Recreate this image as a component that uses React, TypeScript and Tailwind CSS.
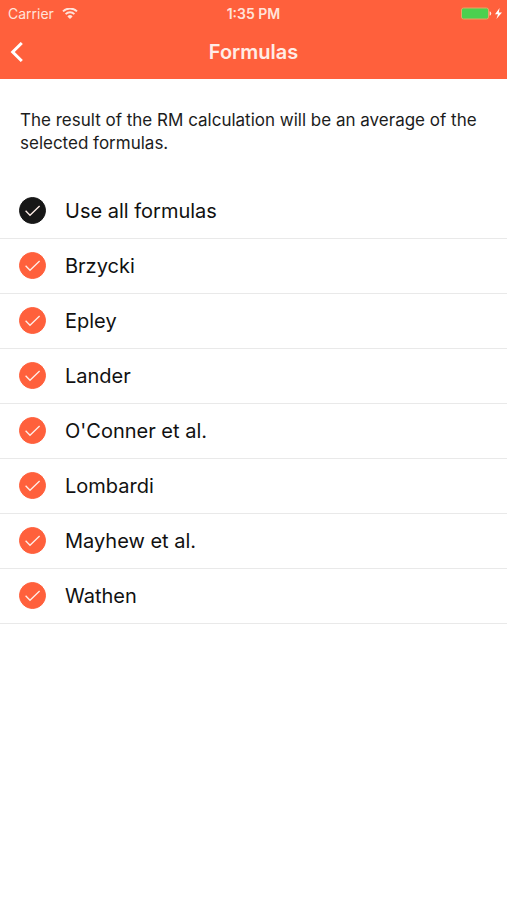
import { useState } from "react";

const FORMULAS = ["Brzycki", "Epley", "Lander", "O'Conner et al.", "Lombardi", "Mayhew et al.", "Wathen"];

const WifiIcon = () => (
  <svg viewBox="0 0 16 12" className="h-3 w-4" fill="none" stroke="currentColor" strokeWidth="1.9" aria-hidden="true">
    <path d="M1 3.4a9.9 9.9 0 0 1 14 0" />
    <path d="M3.6 6.1a6.2 6.2 0 0 1 8.8 0" />
    <path d="M8 11 5.4 8.4a3.7 3.7 0 0 1 5.2 0z" fill="currentColor" stroke="none" />
  </svg>
);

const BatteryIcon = () => (
  <svg viewBox="0 0 42 14" className="h-3.5 w-[42px]" aria-hidden="true">
    <rect x="0.5" y="1" width="27" height="11" rx="2" fill="#4cd04f" stroke="#e6a565" />
    <path d="M28.6 4.3a2.3 2.3 0 0 1 0 4.4z" fill="#ffe3da" />
    <path d="M38.6 1 34 7.3h3L35.4 12l5.6-6.6h-3.2z" fill="#fff" />
  </svg>
);

const StatusBar = () => (
  <div className="grid h-7 grid-cols-3 items-center px-2 text-[14px] leading-5 text-[#ffe3da]">
    <div className="flex items-center gap-2">
      <span>Carrier</span>
      <WifiIcon />
    </div>
    <span className="text-center font-semibold">1:35 PM</span>
    <div className="-mr-1 flex justify-end">
      <BatteryIcon />
    </div>
  </div>
);

const NavBar = () => (
  <div className="grid h-[51px] grid-cols-[48px_1fr_48px] items-center pb-1">
    <button type="button" aria-label="Back" className="flex h-10 items-center pl-2.5 text-white">
      <svg viewBox="0 0 14 20" className="h-5 w-3.5" fill="none" stroke="currentColor" strokeWidth="3" aria-hidden="true">
        <path d="M11.8 1 2.7 10l9.1 9" />
      </svg>
    </button>
    <h1 className="text-center text-[20px] font-semibold leading-6 text-[#ffece6]">Formulas</h1>
  </div>
);

type FormulaRowProps = {
  label: string;
  checked: boolean;
  dark?: boolean;
  onChange: (checked: boolean) => void;
};

const FormulaRow = ({ label, checked, dark = false, onChange }: FormulaRowProps) => (
  <li className="border-b border-[#e9e9e9]">
    <label className="flex h-[54px] cursor-pointer items-center gap-[19px] px-[19px] pb-px">
      <span className="grid place-items-center">
        <input
          type="checkbox"
          checked={checked}
          onChange={(event) => onChange(event.target.checked)}
          className={`col-start-1 row-start-1 size-[27px] appearance-none rounded-full border ${
            dark ? "border-[#171717] checked:bg-[#171717]" : "border-[#ff603c] checked:bg-[#ff603c]"
          }`}
        />
        {checked ? (
          <svg
            viewBox="0 0 27 27"
            className="pointer-events-none col-start-1 row-start-1 size-[27px]"
            fill="none"
            stroke="#ffeee8"
            strokeWidth="1.3"
            aria-hidden="true"
          >
            <path d="m6.6 13.8 4.4 4.5L20.6 9" />
          </svg>
        ) : null}
      </span>
      <span className="text-[20px] leading-6 text-[#111]">{label}</span>
    </label>
  </li>
);

export default function App() {
  const [selected, setSelected] = useState<string[]>(FORMULAS);

  const toggleFormula = (name: string, checked: boolean) => {
    setSelected((current) => (checked ? [...current, name] : current.filter((item) => item !== name)));
  };

  return (
    <div className="min-h-screen bg-white font-['Inter',sans-serif]">
      <header className="bg-[#ff603c]">
        <StatusBar />
        <NavBar />
      </header>
      <main>
        <p className="px-5 pb-[29px] pt-[30px] text-[17px] leading-[23px] text-[#1c1c1c]">
          The result of the RM calculation will be an average of the selected formulas.
        </p>
        <ul>
          <FormulaRow
            label="Use all formulas"
            dark
            checked={selected.length === FORMULAS.length}
            onChange={(checked) => setSelected(checked ? FORMULAS : [])}
          />
          {FORMULAS.map((name) => (
            <FormulaRow
              key={name}
              label={name}
              checked={selected.includes(name)}
              onChange={(checked) => toggleFormula(name, checked)}
            />
          ))}
        </ul>
      </main>
    </div>
  );
}
